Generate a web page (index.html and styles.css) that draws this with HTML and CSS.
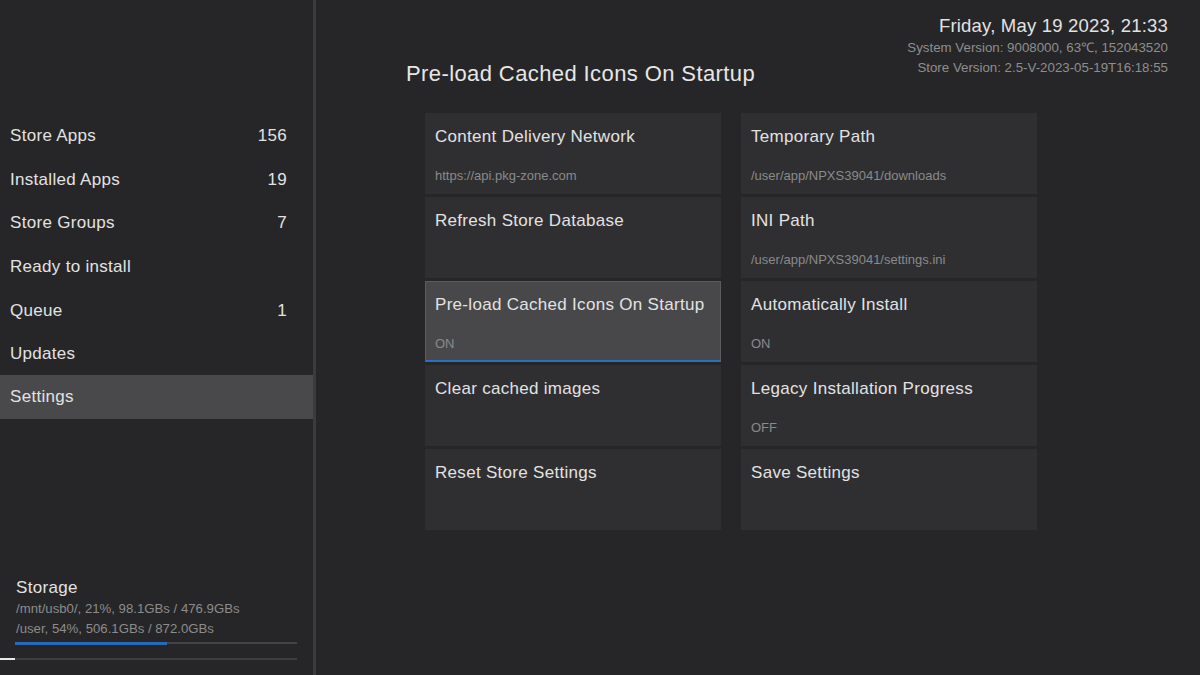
FILE: index.html
```html
<!DOCTYPE html>
<html>
<head>
	<meta charset="utf-8">
	<title>Settings</title>
	<link rel="stylesheet" href="styles.css">
</head>
<body>
	<div class="app">
		<div class="side">
			<ul class="menu">
				<li><span>Store Apps</span><span class="count">156</span></li>
				<li><span>Installed Apps</span><span class="count">19</span></li>
				<li><span>Store Groups</span><span class="count">7</span></li>
				<li><span>Ready to install</span></li>
				<li><span>Queue</span><span class="count">1</span></li>
				<li><span>Updates</span></li>
				<li class="sel"><span>Settings</span></li>
			</ul>

			<div class="storage">
				<div class="st-title">Storage</div>
				<div class="st-line">/mnt/usb0/, 21%, 98.1GBs / 476.9GBs</div>
				<div class="st-line">/user, 54%, 506.1GBs / 872.0GBs</div>
				<div class="bar"><div class="fill" style="width:54%"></div></div>
			</div>
			<div class="bar2"><div class="fill2" style="width:15px"></div></div>
		</div>

		<div class="sep"></div>

		<div class="main">
			<div class="head">
				<h1>Pre-load Cached Icons On Startup</h1>
				<div class="info">
					<div class="date">Friday, May 19 2023, 21:33</div>
					<div class="ver">System Version: 9008000, 63&#8451;, 152043520</div>
					<div class="ver">Store Version: 2.5-V-2023-05-19T16:18:55</div>
				</div>
			</div>

			<div class="grid">
				<div class="card">
					<div class="name">Content Delivery Network</div>
					<div class="val">https://api.pkg-zone.com</div>
				</div>
				<div class="card">
					<div class="name">Temporary Path</div>
					<div class="val">/user/app/NPXS39041/downloads</div>
				</div>
				<div class="card">
					<div class="name">Refresh Store Database</div>
				</div>
				<div class="card">
					<div class="name">INI Path</div>
					<div class="val">/user/app/NPXS39041/settings.ini</div>
				</div>
				<div class="card focus">
					<div class="name">Pre-load Cached Icons On Startup</div>
					<div class="val">ON</div>
				</div>
				<div class="card">
					<div class="name">Automatically Install</div>
					<div class="val">ON</div>
				</div>
				<div class="card">
					<div class="name">Clear cached images</div>
				</div>
				<div class="card">
					<div class="name">Legacy Installation Progress</div>
					<div class="val">OFF</div>
				</div>
				<div class="card">
					<div class="name">Reset Store Settings</div>
				</div>
				<div class="card">
					<div class="name">Save Settings</div>
				</div>
			</div>
		</div>
	</div>
</body>
</html>
```

FILE: styles.css
```css
html, body
{
	margin: 0;
	padding: 0;
	background: #262628;
	color: #e4e4e4;
	font-family: "Liberation Sans", Arial, sans-serif;
}

.app
{
	display: flex;
	width: 1200px;
	height: 675px;
	overflow: hidden;
}

.side
{
	width: 313px;
	display: flex;
	flex-direction: column;
}

.sep
{
	width: 3px;
	background: #3b3b3d;
}

.menu
{
	list-style: none;
	margin: 114px 0 0 0;
	padding: 0;
}

.menu li
{
	height: 43.7px;
	display: flex;
	align-items: center;
	justify-content: space-between;
	padding: 0 26px 0 10px;
	font-size: 17px;
	letter-spacing: 0.3px;
	color: #e2e2e2;
}

.menu li.sel
{
	background: #49494b;
	margin-top: -1px;
	padding-bottom: 1px;
	height: 43px;
}

.storage
{
	margin-top: auto;
	padding: 0 16px 0 15px;
}

.st-title
{
	font-size: 17px;
	letter-spacing: 0.3px;
	padding-left: 1px;
	line-height: 22px;
	color: #e2e2e2;
}

.st-line
{
	font-size: 13.2px;
	color: #8c8c8c;
	line-height: 20px;
	padding-left: 1px;
}

.bar
{
	margin-top: 4px;
	height: 2px;
	background: #444446;
}

.fill
{
	height: 3px;
	background: #2a68b8;
	margin-top: -1px;
}

.bar2
{
	margin: 14px 16px 15px 0;
	height: 2px;
	background: #3e3e40;
}

.fill2
{
	height: 2px;
	background: #e8e8e8;
}

.main
{
	flex: 1;
	padding: 0 32px 0 90px;
}

.head
{
	display: flex;
	justify-content: space-between;
	height: 113px;
}

h1
{
	margin: 61px 0 0 0;
	font-size: 22px;
	letter-spacing: 0.4px;
	font-weight: normal;
	color: #e6e6e6;
	line-height: 26px;
}

.info
{
	text-align: right;
	padding-top: 15px;
}

.date
{
	font-size: 18.5px;
	letter-spacing: 0.2px;
	line-height: 22px;
	color: #e2e2e2;
	margin-bottom: 1px;
}

.ver
{
	font-size: 13.3px;
	line-height: 20px;
	color: #8e8e8e;
}

.grid
{
	display: grid;
	grid-template-columns: 296px 296px;
	grid-auto-rows: 81px;
	column-gap: 20px;
	row-gap: 3px;
	margin-left: 19px;
}

.card
{
	background: #2f2f31;
	padding: 15px 10px 0 10px;
	box-sizing: border-box;
}

.card.focus
{
	background: #48484a;
	border: 1px solid #5c5c5e;
	border-bottom: 2px solid #2f6fc2;
	padding: 14px 9px 0 9px;
}

.name
{
	font-size: 17px;
	letter-spacing: 0.3px;
	line-height: 18px;
	color: #e2e2e2;
}

.val
{
	margin-top: 22px;
	font-size: 13px;
	color: #8a8a8a;
}
```
